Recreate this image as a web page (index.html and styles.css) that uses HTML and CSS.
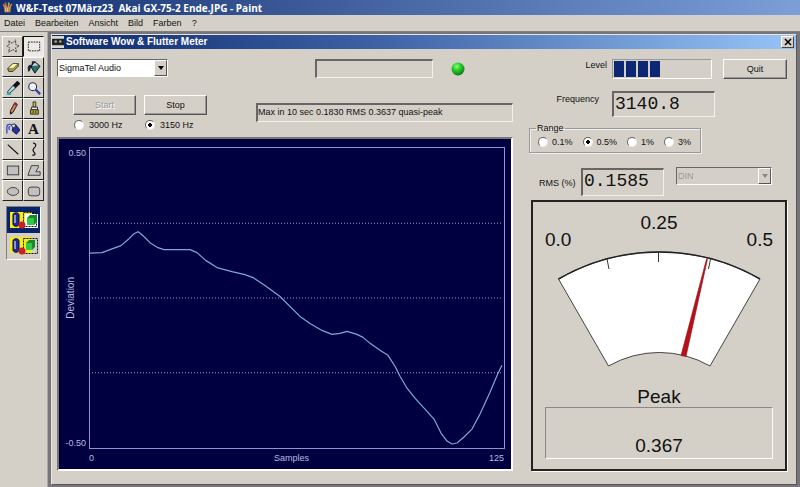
FILE: index.html
```html
<!DOCTYPE html>
<html lang="de">
<head>
<meta charset="utf-8">
<meta name="viewport" content="width=device-width, initial-scale=1">
<title>W&amp;F-Test - Paint</title>
<link rel="stylesheet" href="styles.css">
</head>
<body>
<header class="app-title">
  <svg class="app-icon" viewBox="0 0 16 16" aria-hidden="true"><path d="M4 8l-2-5M6 8L5 1M9 8l1-7M11 8l3-5" stroke="#d8a040" stroke-width="2"/><path d="M3 7h10l-1 8H4z" fill="#c98b4a"/><path d="M5 1v3M2 3l1 2" stroke="#e04040" stroke-width="2"/><path d="M10 1v3" stroke="#70c070" stroke-width="2"/><path d="M5 9v5M8 9v5" stroke="#f0d8a0"/></svg>
  <h1>W&amp;F-Test 07März23  Akai GX-75-2 Ende.JPG - Paint</h1>
</header>
<nav class="menu">
  <button type="button">Datei</button>
  <button type="button">Bearbeiten</button>
  <button type="button">Ansicht</button>
  <button type="button">Bild</button>
  <button type="button">Farben</button>
  <button type="button">?</button>
</nav>
<main class="work">
  <aside class="toolbox">
    <div class="tools">
      <button type="button" aria-label="Freihandauswahl"><svg viewBox="0 0 16 16"><path d="M3 2l4 3 4-4 0 5 4 2-4 2 1 5-4-3-5 3 1-5-3-2 3-2z" fill="none" stroke="#222" stroke-dasharray="2 1"/></svg></button>
      <button type="button" class="on" aria-label="Auswahl"><svg viewBox="0 0 16 16"><rect x="1.500" y="3.500" width="13" height="10" fill="none" stroke="#111" stroke-dasharray="2 1"/></svg></button>
      <button type="button" aria-label="Radiergummi"><svg viewBox="0 0 16 16"><path d="M2 10l6-6h6v3l-6 6H3z" fill="#b8a850" stroke="#222"/><path d="M2 10l6-6h6l-6 6z" fill="#fff6a0" stroke="#333" stroke-width=".7"/></svg></button>
      <button type="button" aria-label="Farbfüller"><svg viewBox="0 0 16 16"><path d="M4 7l5-5 6 5-6 8z" fill="#28706c" stroke="#111"/><path d="M5 7l4-4 4 3z" fill="#c8d8d8"/><path d="M6 6V2h3M4 6C1 6 1 9 2 13c2-2 1-5 4-6z" fill="#226" stroke="#111"/></svg></button>
      <button type="button" aria-label="Farbauswahl"><svg viewBox="0 0 16 16"><path d="M9 5l4-4 2 2-4 4z" fill="#111" stroke="#111" stroke-width="2"/><path d="M8 5l3 3-7 6H2v-2z" fill="#a0e0e8" stroke="#222"/><path d="M1 15h5" stroke="#30b0b8" stroke-width="2"/></svg></button>
      <button type="button" aria-label="Lupe"><svg viewBox="0 0 16 16"><circle cx="6.500" cy="6.500" r="4.500" fill="#e8f0f8" stroke="#335" stroke-width="1.300"/><path d="M10 10l5 5" stroke="#3038a8" stroke-width="2.500"/><path d="M4 6l3-2" stroke="#fff"/></svg></button>
      <button type="button" aria-label="Stift"><svg viewBox="0 0 16 16"><path d="M5 11L10 2l3 2-5 9-3 2z" fill="#c88060" stroke="#111"/><path d="M9 4l3 2 1-3-2-2z" fill="#a03028"/><path d="M5 12v3l2-1z" fill="#111"/></svg></button>
      <button type="button" aria-label="Pinsel"><svg viewBox="0 0 16 16"><path d="M7 1h3v6H7z" fill="#d8c040" stroke="#222"/><path d="M5 7h7v3H5z" fill="#eee" stroke="#222"/><path d="M4 10h9v5H4z" fill="#b8ac38" stroke="#222"/><path d="M7 11v3M10 11v3" stroke="#222"/></svg></button>
      <button type="button" aria-label="Airbrush"><svg viewBox="0 0 16 16"><path d="M8 6l3-3 5 6-4 5-5-4z" fill="#2430a0" stroke="#113"/><path d="M6 3l4-1 1 3-3 2z" fill="#d0d8f0" stroke="#224"/><path d="M6 3C3 2 1 3 1 6v7M5 5C3 5 3 7 4 9" fill="none" stroke="#3848c0" stroke-width="1.500"/></svg></button>
      <button type="button" class="letter" aria-label="Text">A</button>
      <button type="button" aria-label="Linie"><svg viewBox="0 0 16 16"><path d="M2 3l12 11" stroke="#111" stroke-width="1.300"/></svg></button>
      <button type="button" aria-label="Kurve"><svg viewBox="0 0 16 16"><path d="M7 1c4 1 4 3 1 6s0 4 1 6-2 2-3 2" fill="none" stroke="#111" stroke-width="1.300"/></svg></button>
      <button type="button" aria-label="Rechteck"><svg viewBox="0 0 16 16"><rect x="1.500" y="3.500" width="13" height="10" fill="#c0c0c0" stroke="#333"/></svg></button>
      <button type="button" aria-label="Vieleck"><svg viewBox="0 0 16 16"><path d="M5 3h8v2l-3 5h5v4H1z" fill="#c4c4c4" stroke="#333"/></svg></button>
      <button type="button" aria-label="Ellipse"><svg viewBox="0 0 16 16"><ellipse cx="8" cy="8.500" rx="6.500" ry="4.500" fill="#c0c0c0" stroke="#333"/></svg></button>
      <button type="button" aria-label="Abgerundetes Rechteck"><svg viewBox="0 0 16 16"><rect x="1.500" y="3.500" width="13" height="10" rx="3" fill="#c0c0c0" stroke="#333"/></svg></button>
    </div>
    <div class="modes">
      <button type="button" class="on" aria-label="Deckend"><svg viewBox="0 0 32 24"><path d="M2 4h22v16H2z" fill="#f4ea20"/><rect x="17" y="6" width="13" height="14" fill="#fff"/><rect x="15.500" y="4.500" width="13" height="14" fill="none" stroke="#111" stroke-dasharray="2 1"/><path d="M5 7c0-3 6-3 6 0v9c0 3-6 3-6 0z" fill="#2028a0" stroke="#112"/><path d="M7 7v8" stroke="#fff"/><circle cx="14" cy="17" r="3.500" fill="#c8202c"/><path d="M19 10l3-3h7v7l-3 3h-7z" fill="#188828"/><path d="M19 10h7v7h-7z" fill="#30c848"/></svg></button>
      <button type="button" aria-label="Transparent"><svg viewBox="0 0 32 24"><path d="M2 3h22v16H2z" fill="#f4ea20"/><rect x="15.500" y="4.500" width="14" height="15" fill="none" stroke="#111" stroke-dasharray="2 1"/><path d="M5 7c0-3 6-3 6 0v9c0 3-6 3-6 0z" fill="#2028a0" stroke="#112"/><path d="M7 7v8" stroke="#fff"/><circle cx="14" cy="17" r="3.500" fill="#c8202c"/><path d="M18 9l3-3h6v7l-3 3h-6z" fill="#188828"/><path d="M18 9h6v7h-6z" fill="#30c848"/></svg></button>
    </div>
  </aside>
  <section class="canvas">
    <div class="window">
      <header class="win-title">
        <svg class="win-icon" viewBox="0 0 13 13" aria-hidden="true"><path d="M0 0h13v13H0z" fill="#d8d8d8"/><path d="M0 3h13v7H0z" fill="#222"/><circle cx="4" cy="6" r="1.500" fill="#999"/><circle cx="9" cy="6" r="1.500" fill="#999"/></svg>
        <h2>Software Wow &amp; Flutter Meter</h2>
        <button type="button" class="close" aria-label="Schließen"><svg viewBox="0 0 8 8"><path d="M1 1l6 6M7 1L1 7" stroke="#000" stroke-width="1.500"/></svg></button>
      </header>
      <div class="body">
        <div class="left">
          <div class="source-row">
            <div class="combo source"><select aria-label="Audioquelle"><option>SigmaTel Audio</option></select><span class="arrow"></span></div>
            <div class="signal"><div class="sunken blank"></div>
            <svg class="led" viewBox="0 0 14 14" aria-hidden="true"><defs><radialGradient id="g" cx=".4" cy=".3" r=".7"><stop offset="0" stop-color="#8cff7c"/><stop offset=".4" stop-color="#2cd42c"/><stop offset="1" stop-color="#107818"/></radialGradient></defs><circle cx="7" cy="7" r="6.500" fill="url(#g)"/></svg></div>
          </div>
          <div class="run-row">
            <div class="run">
              <button type="button" class="btn" disabled>Start</button>
              <button type="button" class="btn">Stop</button>
              <label><input type="radio" name="hz">3000 Hz</label>
              <label><input type="radio" name="hz" checked>3150 Hz</label>
            </div>
            <output class="sunken status">Max in 10 sec 0.1830 RMS 0.3637 quasi-peak</output>
          </div>
          <div class="chart">
            <div class="y-axis"><span>0.50</span><span class="y-name">Deviation</span><span>-0.50</span></div>
            <svg class="plot" viewBox="90 148 414 301" preserveAspectRatio="none" role="img" aria-label="Deviation">
              <path class="grid" d="M92 223.500H502M92 298.500H502M92 373.500H502"/>
              <path class="trace" d="M90 253.500L102 253 110 250 121 246 129 239 134 234 138 232 142 235 150 243 158 248 164 250 190 250 197 253 206 261 217 268 232 272 245 275 253 278 265 286 280 297 300 317 310 324 322 331 332 335 340 334 347 332 357 335 363 338 370 344 380 351 388 356 395 367 400 377 407 389 415 399 425 410 434 420 441 434 447 442 452 445 457 444 464 438 472 430 480 415 490 393 498 374 502 366"/>
            </svg>
            <div class="x-axis"><span>0</span><span>Samples</span><span>125</span></div>
          </div>
        </div>
        <div class="right">
          <div class="level-row">
            <span id="level">Level</span>
            <div class="level" role="meter" aria-labelledby="level" aria-valuemin="0" aria-valuemax="11" aria-valuenow="4"><i></i><i></i><i></i><i></i></div>
            <button type="button" class="btn">Quit</button>
          </div>
          <div class="freq-row">
            <label for="freq">Frequency</label>
            <output id="freq" class="sunken digits freq">3140.8</output>
          </div>
          <fieldset class="range">
            <legend>Range</legend>
            <label><input type="radio" name="range">0.1%</label>
            <label><input type="radio" name="range" checked>0.5%</label>
            <label><input type="radio" name="range">1%</label>
            <label><input type="radio" name="range">3%</label>
          </fieldset>
          <div class="rms-row">
            <label for="rms">RMS (%)</label>
            <output id="rms" class="sunken digits rms">0.1585</output>
            <div class="combo weight"><select aria-label="Bewertung" disabled><option>DIN</option></select><span class="arrow"></span></div>
          </div>
          <div class="gauge">
            <div class="scale"><span>0.0</span><span class="mid">0.25</span><span>0.5</span></div>
            <svg class="dial" viewBox="557 250 204 118" role="img" aria-label="Peak 0.367">
              <path d="M558.500 279A201.500 201.500 0 0 1 760 279L710 366A102 102 0 0 0 608.500 366Z" fill="#fff" stroke="#444"/>
              <path d="M558.500 279A201.500 201.500 0 0 1 760 279" fill="none" stroke="#222" stroke-width="1.500"/>
              <path d="M607 259l2 10M658.500 252v10M710.500 259l-2 10" stroke="#333"/>
              <path d="M706.500 259L681 355.500 686 356.500 707.500 259z" fill="#b81018" stroke="#901018" stroke-width=".6"/>
            </svg>
            <span class="peak-name">Peak</span>
            <output class="peak">0.367</output>
          </div>
        </div>
      </div>
    </div>
  </section>
</main>
</body>
</html>
```
FILE: styles.css
```css
* { box-sizing: border-box; }
:root {
  --face: #d4d0c8;
  --shade: #808080;
  --navy: #0a246a;
}
body {
  margin: 0;
  min-height: 100vh;
  display: flex;
  flex-direction: column;
  background: var(--face);
  color: #111;
  font: 9px/12px "Liberation Sans", Arial, sans-serif;
}
h1, h2 { margin: 0; white-space: pre; color: #fff; font: bold 10px/14px "Open Sans", Tahoma, sans-serif; }
h2 { font-family: "Liberation Sans", Arial, sans-serif; }
button, select, input { font: inherit; color: inherit; margin: 0; padding: 0; }
svg { display: block; }

.app-title {
  display: flex;
  align-items: center;
  gap: 3px;
  height: 15px;
  padding-left: 2px;
  background: linear-gradient(90deg, #143070, #7c9fd8);
}
.app-icon { width: 11px; height: 13px; }
.menu { display: flex; gap: 10px; height: 16px; padding-left: 4px; }
.menu button { border: 0; background: none; line-height: 16px; }

.work { flex: 1; display: flex; border-top: 1px solid var(--shade); }
.toolbox { width: 47px; padding: 4px 3px 0 2px; }
.tools { display: grid; grid-template-columns: 1fr 1fr; grid-template-rows: repeat(8, 1fr); height: 165px; }
.tools button {
  display: grid;
  place-items: center;
  border: 1px solid;
  border-color: #fff #222 #222 #fff;
  background: var(--face);
}
.tools .on { background: #eceae6; border-color: #111 #eee #eee #111; }
.tools svg { width: 14px; height: 14px; }
.tools .letter { font: bold 15px/16px "Liberation Serif", serif; }
.modes { width: 35px; margin: 5px 0 0 4px; border: 1px solid; border-color: var(--shade) #fff #fff var(--shade); }
.modes button { display: block; width: 100%; height: 26px; border: 0; background: none; }
.modes .on { background: var(--navy); }
.modes svg { width: 32px; height: 24px; margin: 0 auto; }

.canvas { flex: 1; min-width: 0; display: flex; padding: 2px 3px 2px 3px; background: #77757a; border-left: 1px solid #aaa; }
.window { flex: 1; min-width: 0; display: flex; flex-direction: column; background: var(--face); border: 1px solid; border-color: #e8e6e0 #55555a #55555a #e8e6e0; }
.win-title {
  display: flex;
  align-items: center;
  gap: 2px;
  height: 14px;
  padding-right: 2px;
  background: linear-gradient(90deg, #0c2a6c, #3c5fa4 42%, #96c4f8);
}
.win-icon { width: 12px; height: 12px; }
.close {
  margin-left: auto;
  width: 13px;
  height: 12px;
  display: grid;
  place-items: center;
  background: var(--face);
  border: 1px solid;
  border-color: #fff #444 #444 #fff;
}
.close svg { width: 8px; height: 8px; }

.body { flex: 1; display: flex; gap: 16px; padding: 10px 9px 13px 5px; }
.left { flex: 1; min-width: 0; display: flex; flex-direction: column; }
.right { width: 258px; display: flex; flex-direction: column; }

.sunken { display: block; border: 2px solid; border-color: #666 #f4f2ee #f4f2ee #666; border-right-width: 1px; border-bottom-width: 1px; }
.btn {
  height: 20px;
  background: var(--face);
  border: 1px solid;
  border-color: #fff #555 #555 #fff;
  box-shadow: inset -1px -1px #999;
}
.btn:disabled { color: #999; text-shadow: 1px 1px #fff; }
input[type="radio"] {
  appearance: none;
  width: 10px;
  height: 10px;
  border: 1px solid;
  border-color: #666 #eee #eee #666;
  border-radius: 50%;
  background: #fff;
}
input[type="radio"]:checked { background: radial-gradient(circle, #000 0 2px, #fff 2px); }
label { display: flex; align-items: center; white-space: nowrap; }
.combo { display: grid; grid-template-columns: 1fr auto; border: 1px solid; border-color: #666 #fff #fff #666; background: #fff; }
.combo select { appearance: none; border: 0; background: none; outline: 0; padding-left: 1px; }
.arrow { width: 13px; display: grid; place-items: center; background: var(--face); border: 1px solid; border-color: #fff #555 #555 #fff; pointer-events: none; }
.arrow::before { content: ""; border: 3px solid transparent; border-top: 4px solid #000; border-bottom: 0; }

.source-row { display: flex; justify-content: space-between; align-items: flex-start; padding: 0 48px 0 0; }
.source { width: 111px; height: 18px; }
.signal { display: flex; align-items: center; gap: 18px; }
.blank { width: 118px; height: 19px; }
.led { width: 14px; height: 14px; }

.run-row { display: flex; justify-content: space-between; align-items: flex-start; padding: 17px 0 6px 16px; }
.run { display: grid; grid-template-columns: 63px 63px; gap: 4px 8px; }
.run label { gap: 5px; height: 12px; padding-left: 1px; }
.status { width: 257px; height: 19px; margin-top: 8px; line-height: 15px; white-space: nowrap; }

.chart {
  flex: 1;
  display: grid;
  grid-template-columns: 30px 1fr;
  grid-template-rows: 1fr 20px;
  padding: 8px 6px 0 0;
  background: #000040;
  color: #b8bce0;
  border: 2px solid;
  border-color: #77777a #fff #fff #77777a;
}
.y-axis { display: flex; flex-direction: column; justify-content: space-between; align-items: flex-end; padding-right: 3px; }
.y-name { writing-mode: vertical-rl; transform: rotate(180deg); margin-right: 9px; font-size: 10px; }
.plot { width: 100%; height: 100%; min-height: 0; border: 1px solid #9094cc; contain: size; }
.grid { stroke: #9c9ccc; stroke-dasharray: 1 2; fill: none; }
.trace { stroke: #7ea6dc; stroke-width: 1.2px; fill: none; stroke-linejoin: round; }
.x-axis { grid-column: 2; display: flex; justify-content: space-between; line-height: 18px; padding-right: 1px; }

.level-row { display: flex; align-items: flex-start; justify-content: flex-end; }
.level-row .btn { width: 64px; margin-left: 11px; }
#level { margin-right: 5px; }
.level { width: 100px; height: 20px; display: flex; gap: 2px; padding: 1px; border: 1px solid; border-color: #999 #fff #fff #999; }
.level i { width: 10px; background: #0c2874; }
.freq-row { display: flex; justify-content: flex-end; gap: 13px; padding: 12px 72px 0 0; }
.freq-row label { height: 16px; }
.digits { font: 18px/22px "Liberation Mono", monospace; padding-left: 1px; }
.freq { width: 103px; height: 26px; }
.range { display: flex; gap: 10px; width: 172px; height: 31px; margin: 5px 0 0 0; padding: 2px 0 0 8px; border: 1px solid #999; box-shadow: inset 1px 1px #eee, 1px 1px #eee; }
.range legend { padding: 0 1px; margin-left: -2px; }
.range label { gap: 4px; height: 12px; }
.rms-row { display: flex; align-items: flex-start; padding: 14px 0 0 10px; }
.rms-row label { width: 42px; height: 32px; }
.rms { width: 83px; height: 28px; margin-top: 1px; }
.weight { width: 96px; height: 18px; margin-left: 12px; background: var(--face); color: #999; }
.weight select { opacity: 1; }
.weight .arrow::before { border-top-color: #888; }

.gauge {
  flex: 1;
  display: flex;
  flex-direction: column;
  margin: 1px 0 0 2px;
  padding: 11px 12px 10px;
  border: 2px solid #222;
  box-shadow: 1px 1px #fff;
  font-size: 19px;
  line-height: 20px;
}
.scale { display: flex; justify-content: space-between; align-items: flex-end; }
.mid { padding-bottom: 17px; }
.dial { width: 204px; height: 118px; margin: 0 auto; }
.peak-name { margin-top: 19px; text-align: center; }
.peak { flex: 1; display: flex; align-items: flex-end; justify-content: center; padding-bottom: 2px; border: 1px solid; border-color: #888 #fff #fff #888; }
```
